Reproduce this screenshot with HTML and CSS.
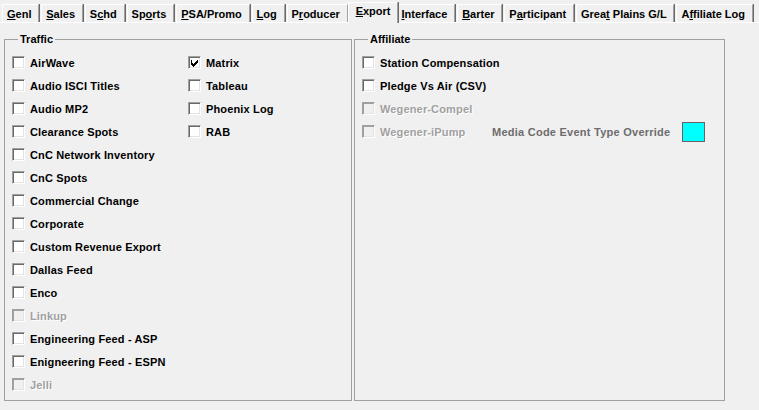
FILE: index.html
```html
<!DOCTYPE html>
<html>
<head>
<meta charset="utf-8">
<link rel="stylesheet" href="styles.css">
</head>
<body>
<div class="tabs">
  <div class="tab"><u>G</u>enl</div>
  <div class="tab"><u>S</u>ales</div>
  <div class="tab">S<u>c</u>hd</div>
  <div class="tab">Sp<u>o</u>rts</div>
  <div class="tab"><u>P</u>SA/Promo</div>
  <div class="tab"><u>L</u>og</div>
  <div class="tab">P<u>r</u>oducer</div>
  <div class="tab active"><u>E</u>xport</div>
  <div class="tab"><u>I</u>nterface</div>
  <div class="tab"><u>B</u>arter</div>
  <div class="tab">P<u>a</u>rticipant</div>
  <div class="tab">Grea<u>t</u> Plains G/L</div>
  <div class="tab">A<u>f</u>filiate Log</div>
</div>
<div class="panel">
  <fieldset class="group traffic">
    <legend>Traffic</legend>
    <div class="cols">
      <div class="col col1">
        <div class="cb"><span class="box"></span>AirWave</div>
        <div class="cb"><span class="box"></span>Audio ISCI Titles</div>
        <div class="cb"><span class="box"></span>Audio MP2</div>
        <div class="cb"><span class="box"></span>Clearance Spots</div>
        <div class="cb"><span class="box"></span>CnC Network Inventory</div>
        <div class="cb"><span class="box"></span>CnC Spots</div>
        <div class="cb"><span class="box"></span>Commercial Change</div>
        <div class="cb"><span class="box"></span>Corporate</div>
        <div class="cb"><span class="box"></span>Custom Revenue Export</div>
        <div class="cb"><span class="box"></span>Dallas Feed</div>
        <div class="cb"><span class="box"></span>Enco</div>
        <div class="cb disabled"><span class="box"></span>Linkup</div>
        <div class="cb"><span class="box"></span>Engineering Feed - ASP</div>
        <div class="cb"><span class="box"></span>Enigneering Feed - ESPN</div>
        <div class="cb disabled"><span class="box"></span>Jelli</div>
      </div>
      <div class="col col2">
        <div class="cb"><span class="box"><svg width="11" height="11" viewBox="0 0 11 11"><path d="M2 3h1v3h1v1h1V6h1V5h1V4h1V3h1v3h-1v1h-1v1h-1v1h-1v1H4V9H3V8H2z" fill="#000"/></svg></span>Matrix</div>
        <div class="cb"><span class="box"></span>Tableau</div>
        <div class="cb"><span class="box"></span>Phoenix Log</div>
        <div class="cb"><span class="box"></span>RAB</div>
      </div>
    </div>
  </fieldset>
  <fieldset class="group affiliate">
    <legend>Affiliate</legend>
    <div class="col">
      <div class="cb"><span class="box"></span>Station Compensation</div>
      <div class="cb"><span class="box"></span>Pledge Vs Air (CSV)</div>
      <div class="cb disabled"><span class="box"></span>Wegener-Compel</div>
      <div class="row">
        <div class="cb disabled fixed"><span class="box"></span>Wegener-iPump</div>
        <span class="media">Media Code Event Type Override</span>
        <span class="swatch"></span>
      </div>
    </div>
  </fieldset>
</div>
</body>
</html>
```
FILE: styles.css
```css
html, body {
  margin: 0;
  padding: 0;
  background: #f0f0f0;
  width: 759px;
  height: 410px;
  overflow: hidden;
  font-family: "Liberation Sans", Arial, sans-serif;
  font-size: 11px;
  font-weight: bold;
  color: #000;
}

.tabs {
  display: flex;
  align-items: flex-end;
  height: 22px;
  padding-left: 2px;
}

.tab {
  height: 18px;
  box-sizing: border-box;
  padding: 3px 6.8px 0 4px;
  line-height: 13px;
  border-top: 1px solid #fff;
  border-left: 1px solid #fff;
  border-right: 1px solid #a0a0a0;
  box-shadow: 1px 0 0 #696969;
  margin-right: 2px;
  white-space: nowrap;
}

.tab u {
  text-decoration-thickness: 1px;
  text-underline-offset: 1px;
}

.tab.active {
  height: 21px;
  margin: 0 0 -1px -2px;
  padding: 2px 7px 0 7px;
  position: relative;
  z-index: 2;
  background: #f0f0f0;
}

.tab.active + .tab {
  margin-left: -2px;
}

.panel {
  border-top: 1px solid #fff;
  display: grid;
  grid-template-columns: 348px 371px;
  column-gap: 2px;
  padding: 10px 0 0 4px;
  height: 368px;
}

.group {
  margin: 0;
  padding: 0 0 0 7px;
  border: 1px solid #a0a0a0;
  min-width: 0;
}

.group legend {
  padding: 0 2px;
  margin-left: 6px;
  line-height: 13px;
}

.cols {
  display: flex;
  padding-top: 5px;
}

.col1 {
  width: 176px;
}

.affiliate .col {
  padding-top: 5px;
}

.cb {
  display: flex;
  align-items: center;
  height: 23px;
  gap: 5px;
  white-space: nowrap;
  letter-spacing: 0.15px;
}

.box {
  width: 13px;
  height: 13px;
  box-sizing: border-box;
  border-top: 1px solid #a0a0a0;
  border-left: 1px solid #a0a0a0;
  border-right: 1px solid #fff;
  border-bottom: 1px solid #fff;
  box-shadow: inset 1px 1px 0 #696969, inset -1px -1px 0 #e3e3e3;
  background: #fff;
  flex: none;
  display: flex;
  align-items: center;
  justify-content: center;
}

.box svg {
  display: block;
}

.cb.disabled {
  color: #a0a0a0;
  text-shadow: 1px 1px 0 #fff;
}

.cb.disabled .box {
  background: #f0f0f0;
  box-shadow: inset 1px 1px 0 #a0a0a0, inset -1px -1px 0 #e3e3e3;
}

.row {
  display: flex;
  align-items: center;
}

.fixed {
  width: 130px;
}

.media {
  color: #6d6d6d;
  white-space: nowrap;
  letter-spacing: 0.25px;
}

.swatch {
  width: 23px;
  height: 20px;
  box-sizing: border-box;
  border: 1px solid #646464;
  background: #00ffff;
  margin-left: 12px;
}
```
